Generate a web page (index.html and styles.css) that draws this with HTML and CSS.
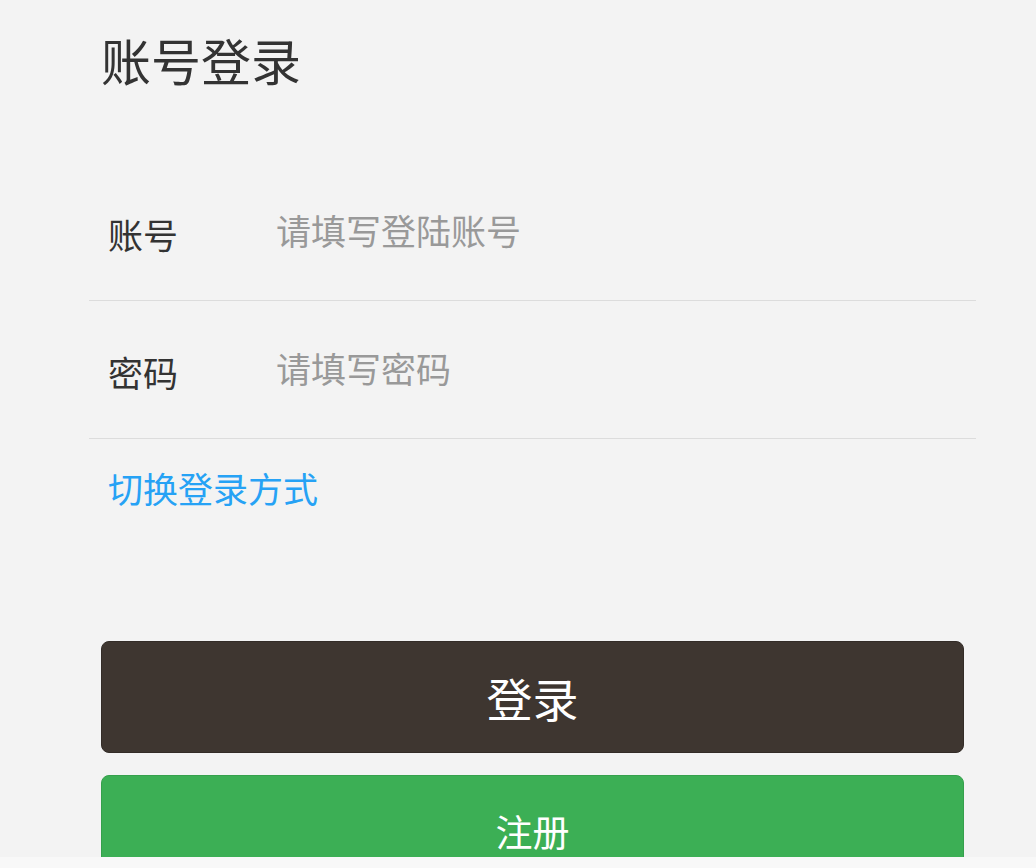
FILE: index.html
```html
<!DOCTYPE html>
<html lang="zh-CN">
<head>
<meta charset="utf-8">
<title>账号登录</title>
<link rel="stylesheet" href="styles.css">
</head>
<body>
<div class="page">
  <h1 class="title">账号登录</h1>
  <form class="form">
    <div class="row">
      <label class="label" for="acc">账号</label>
      <input class="field" id="acc" type="text" placeholder="请填写登陆账号">
    </div>
    <div class="row">
      <label class="label" for="pwd">密码</label>
      <input class="field" id="pwd" type="password" placeholder="请填写密码">
    </div>
    <a class="switch" href="#">切换登录方式</a>
    <div class="actions">
      <button class="btn btn-login" type="button">登录</button>
      <button class="btn btn-register" type="button">注册</button>
    </div>
  </form>
</div>
<div class="bottom-strip"></div>
</body>
</html>
```
FILE: styles.css
```css
html, body {
  margin: 0;
  padding: 0;
  background: #f3f3f3;
}
body {
  font-family: "Noto Sans CJK SC", "Noto Sans", sans-serif;
  color: #333;
}
.page {
  padding: 0 60px 0 89px;
}
.title {
  margin: 34px 0 0 12px;
  font-size: 50px;
  line-height: 50px;
  font-weight: 400;
  color: #333;
}
.form {
  margin-top: 79px;
}
.row {
  display: flex;
  align-items: center;
  height: 137px;
  border-bottom: 1px solid #dcdcdc;
}
.label {
  width: 187px;
  padding-left: 19px;
  padding-top: 3px;
  box-sizing: border-box;
  font-size: 35px;
  line-height: 35px;
  color: #333;
}
.field {
  flex: 1;
  border: none;
  outline: none;
  background: transparent;
  font-family: inherit;
  font-size: 35px;
  line-height: 40px;
  padding: 0 0 4px 0;
  color: #333;
}
.field::placeholder {
  color: #999;
}
.switch {
  display: block;
  margin: 29px 0 0 19px;
  font-size: 35px;
  line-height: 40px;
  color: #26a2f5;
  text-decoration: none;
}
.actions {
  display: flex;
  flex-direction: column;
  gap: 22px;
  margin: 133px 12px 0 12px;
}
.btn {
  height: 112px;
  border-radius: 8px;
  font-family: inherit;
  color: #fff;
  cursor: pointer;
}
.btn-login {
  background: #3e3630;
  border: 1px solid #332c27;
  font-size: 46px;
}
.btn-register {
  background: #3caf55;
  border: 1px solid #35a04c;
  font-size: 37px;
}
.bottom-strip {
  position: fixed;
  left: 0;
  right: 0;
  bottom: 0;
  height: 11px;
  background: #f8f8f8;
}
```
